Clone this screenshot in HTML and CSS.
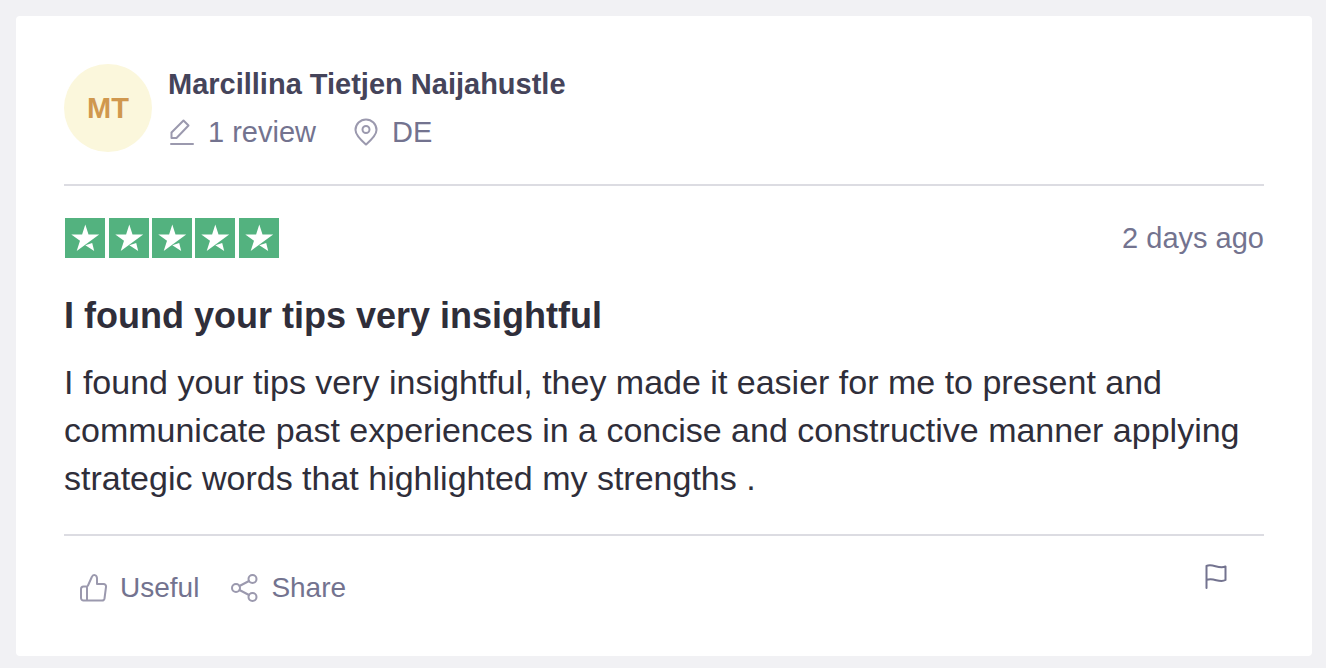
FILE: index.html
```html
<!DOCTYPE html>
<html lang="en">
  <head>
    <meta charset="UTF-8" />
    <meta name="viewport" content="width=device-width, initial-scale=1.0" />
    <title>Review</title>
    <link rel="stylesheet" href="styles.css">
  </head>
  <body>
    <article class="card">
      <!-- Reviewer -->
      <header class="reviewer">
        <div class="avatar">MT</div>
        <div>
          <div class="name">Marcillina Tietjen Naijahustle</div>
          <div class="details">
            <span class="detail">
              <svg class="icon" width="28" height="28" viewBox="0 0 28 28">
                <path d="M3 26h22M3.500 20v-5.500L15.500 2.500l5 5L8.500 20z" />
              </svg>
              1 review
            </span>
            <span class="detail">
              <svg class="icon" width="28" height="28" viewBox="0 0 28 28">
                <path d="M14 26.500C10 23 3.500 17.500 3.500 12a10.500 10.500 0 0 1 21 0C24.500 17.500 18 23 14 26.500z" />
                <circle cx="14" cy="11.500" r="3.500" />
              </svg>
              DE
            </span>
          </div>
        </div>
      </header>

      <!-- Review -->
      <section class="review">
        <div class="rating-row">
          <svg class="stars" width="216" height="40" viewBox="0 0 216 40" role="img" aria-label="5 out of 5 stars">
            <defs>
              <g id="star">
                <path class="star-box" d="M0 0h40v40H0z" />
                <path class="star-shape" d="M20.300 6.500l3.200 10H34.200L11.700 33l3.300-10.300L6.300 16.500h10.800zM20.300 27.300l6.900-2.200 2 7.900z" />
              </g>
            </defs>
            <use href="#star" x="1" />
            <use href="#star" x="45" />
            <use href="#star" x="88" />
            <use href="#star" x="131" />
            <use href="#star" x="175" />
          </svg>
          <time class="date">2 days ago</time>
        </div>
        <h2 class="title">I found your tips very insightful</h2>
        <p class="text">I found your tips very insightful, they made it easier for me to present and communicate past experiences in a concise and constructive manner applying strategic words that highlighted my strengths .</p>
      </section>

      <!-- Actions -->
      <footer class="actions">
        <button class="action" type="button">
          <svg class="icon" width="28" height="28" viewBox="0 0 28 28">
            <path d="M7 12.500V26.500M3.500 12.500A2.500 2.500 0 0 0 1 15v9a2.500 2.500 0 0 0 2.500 2.500H22a2.500 2.500 0 0 0 2.500-2L26 13a2.500 2.500 0 0 0-2.500-3H17V4.500C17 .500 13 0 11.800 3L8 11.500a1.500 1.500 0 0 1-1.500 1z" />
          </svg>
          Useful
        </button>
        <button class="action" type="button">
          <svg class="icon" width="28" height="28" viewBox="0 0 28 28">
            <circle cx="5" cy="14" r="4" />
            <circle cx="21.500" cy="5" r="4" />
            <circle cx="21.500" cy="23" r="4" />
            <path d="M8.500 12l9.500-5M8.500 16l9.500 5" />
          </svg>
          Share
        </button>
        <button class="flag" type="button" aria-label="Report review">
          <svg class="icon" width="28" height="28" viewBox="0 0 28 28">
            <path d="M2.500 24V2c6-3 12 3.500 19 .500V16c-6 3.500-12-3-19 0" />
          </svg>
        </button>
      </footer>
    </article>
  </body>
</html>
```

FILE: styles.css
```css
* {
  box-sizing: border-box;
}

body {
  margin: 0;
  padding: 16px 14px 12px 16px;
  background: #f1f1f4;
  font-family: 'Liberation Sans', Arial, sans-serif;
  color: #2f2e3a;
}

.card {
  padding: 48px;
  background: #fff;
  border-radius: 4px;
}

.reviewer {
  display: flex;
  gap: 16px;
  padding-bottom: 32px;
  border-bottom: 2px solid #dcdce2;
}

.avatar {
  display: flex;
  align-items: center;
  justify-content: center;
  width: 88px;
  height: 88px;
  border-radius: 50%;
  background: #fbf7dc;
  color: #d0984e;
  font-size: 29px;
  font-weight: bold;
}

.name {
  padding-bottom: 8px;
  font-size: 29px;
  line-height: 40px;
  font-weight: bold;
  color: #45445a;
}

.details {
  display: flex;
  gap: 36px;
}

.detail {
  display: flex;
  align-items: center;
  gap: 12px;
  font-size: 29px;
  line-height: 40px;
  color: #73738f;
}

.icon {
  flex: none;
  fill: none;
  stroke: #9b99ae;
  stroke-width: 2;
  stroke-linecap: round;
  stroke-linejoin: round;
}

.review {
  padding: 32px 0;
  border-bottom: 2px solid #dcdce2;
}

.rating-row {
  display: flex;
  align-items: center;
  justify-content: space-between;
}

.star-box {
  fill: #53b27f;
}

.star-shape {
  fill: #fff;
}

.date {
  font-size: 29px;
  line-height: 40px;
  color: #73738f;
}

.title {
  margin: 34px 0 18px;
  font-size: 36px;
  line-height: 48px;
}

.text {
  margin: 0;
  font-size: 34px;
  line-height: 48px;
}

.actions {
  display: flex;
  align-items: flex-start;
  gap: 32px;
  padding: 24px 32px 0 16px;
}

.action,
.flag {
  padding: 0;
  border: 0;
  background: none;
  cursor: pointer;
}

.action {
  display: flex;
  align-items: center;
  gap: 12px;
  padding-top: 8px;
  font-family: inherit;
  font-size: 28px;
  line-height: 40px;
  color: #73738f;
}

.flag {
  display: flex;
  margin: 4px 0 0 auto;
}

.flag .icon {
  stroke: #73738f;
}
```
